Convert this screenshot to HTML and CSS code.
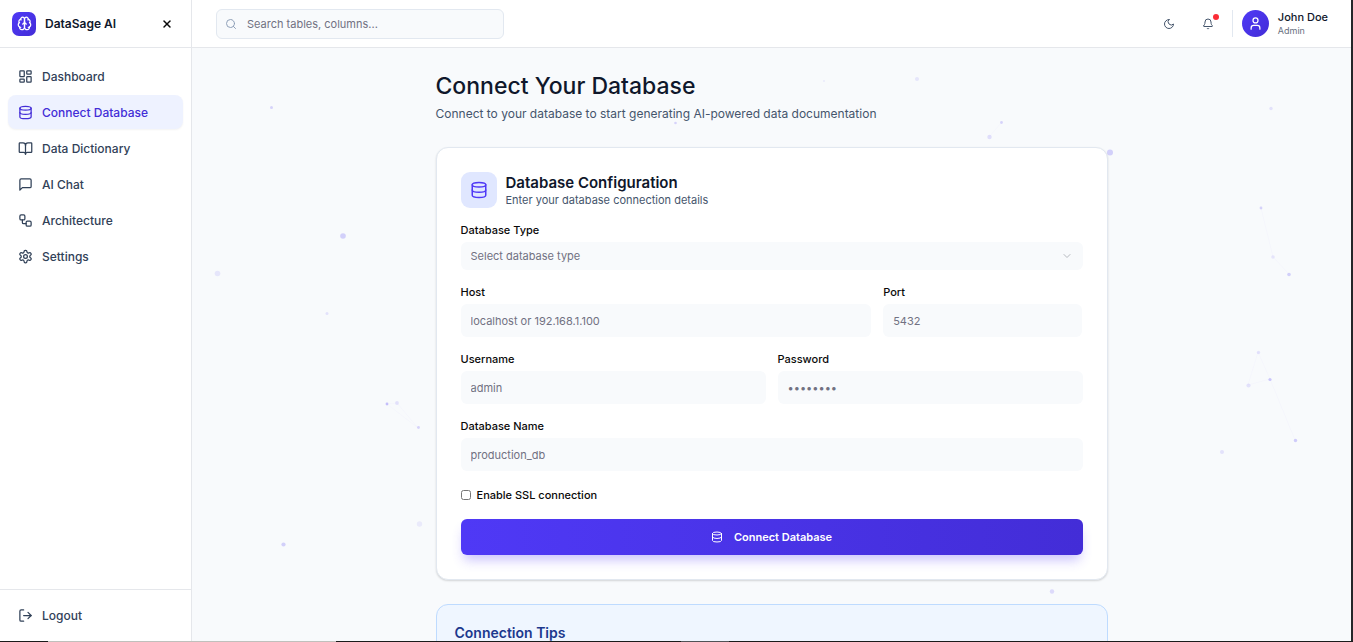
FILE: index.html
```html
<!DOCTYPE html>
<html lang="en">
<head>
  <meta charset="UTF-8" />
  <meta name="viewport" content="width=device-width, initial-scale=1.0"/>
  <title>DataSage AI - Connect Database</title>
  <link rel="stylesheet" href="styles.css">
</head>
<body>
  <!-- shared icons -->
  <svg class="sprite" aria-hidden="true">
    <symbol id="i-database" viewBox="0 0 24 24"><ellipse cx="12" cy="5" rx="9" ry="3"/><path d="M3 5V19A9 3 0 0 0 21 19V5"/><path d="M3 12A9 3 0 0 0 21 12"/></symbol>
  </svg>

  <div class="app">
    <aside class="sidebar">
      <div class="brand">
        <span class="logo">
          <svg class="icon" viewBox="0 0 24 24"><path d="M12 5a3 3 0 1 0-5.997.125 4 4 0 0 0-2.526 5.77 4 4 0 0 0 .556 6.588A4 4 0 1 0 12 18Z"/><path d="M12 5a3 3 0 1 1 5.997.125 4 4 0 0 1 2.526 5.77 4 4 0 0 1-.556 6.588A4 4 0 1 1 12 18Z"/><path d="M15 13a4.5 4.5 0 0 1-3-4 4.5 4.5 0 0 1-3 4"/><path d="M17.599 6.5a3 3 0 0 0 .399-1.375"/><path d="M6.003 5.125A3 3 0 0 0 6.401 6.5"/><path d="M3.477 10.896a4 4 0 0 1 .585-.396"/><path d="M19.938 10.5a4 4 0 0 1 .585.396"/><path d="M6 18a4 4 0 0 1-1.967-.516"/><path d="M19.967 17.484A4 4 0 0 1 18 18"/></svg>
        </span>
        <span class="brand-name">DataSage AI</span>
        <button class="icon-btn close" aria-label="Close sidebar">
          <svg class="icon" viewBox="0 0 24 24"><path d="M18 6 6 18"/><path d="m6 6 12 12"/></svg>
        </button>
      </div>

      <nav class="nav">
        <a class="nav-item" href="#">
          <svg class="icon" viewBox="0 0 24 24"><rect width="7" height="9" x="3" y="3" rx="1"/><rect width="7" height="5" x="14" y="3" rx="1"/><rect width="7" height="9" x="14" y="12" rx="1"/><rect width="7" height="5" x="3" y="16" rx="1"/></svg>
          Dashboard
        </a>
        <a class="nav-item active" href="#">
          <svg class="icon"><use href="#i-database"/></svg>
          Connect Database
        </a>
        <a class="nav-item" href="#">
          <svg class="icon" viewBox="0 0 24 24"><path d="M12 7v14"/><path d="M3 18a1 1 0 0 1-1-1V4a1 1 0 0 1 1-1h5a4 4 0 0 1 4 4 4 4 0 0 1 4-4h5a1 1 0 0 1 1 1v13a1 1 0 0 1-1 1h-6a3 3 0 0 0-3 3 3 3 0 0 0-3-3z"/></svg>
          Data Dictionary
        </a>
        <a class="nav-item" href="#">
          <svg class="icon" viewBox="0 0 24 24"><path d="M21 15a2 2 0 0 1-2 2H7l-4 4V5a2 2 0 0 1 2-2h14a2 2 0 0 1 2 2z"/></svg>
          AI Chat
        </a>
        <a class="nav-item" href="#">
          <svg class="icon" viewBox="0 0 24 24"><rect width="8" height="8" x="3" y="3" rx="2"/><path d="M7 11v4a2 2 0 0 0 2 2h4"/><rect width="8" height="8" x="13" y="13" rx="2"/></svg>
          Architecture
        </a>
        <a class="nav-item" href="#">
          <svg class="icon" viewBox="0 0 24 24"><path d="M12.22 2h-.44a2 2 0 0 0-2 2v.18a2 2 0 0 1-1 1.73l-.43.25a2 2 0 0 1-2 0l-.15-.08a2 2 0 0 0-2.73.73l-.22.38a2 2 0 0 0 .73 2.73l.15.1a2 2 0 0 1 1 1.72v.51a2 2 0 0 1-1 1.74l-.15.09a2 2 0 0 0-.73 2.73l.22.38a2 2 0 0 0 2.73.73l.15-.08a2 2 0 0 1 2 0l.43.25a2 2 0 0 1 1 1.73V20a2 2 0 0 0 2 2h.44a2 2 0 0 0 2-2v-.18a2 2 0 0 1 1-1.73l.43-.25a2 2 0 0 1 2 0l.15.08a2 2 0 0 0 2.73-.73l.22-.39a2 2 0 0 0-.73-2.73l-.15-.08a2 2 0 0 1-1-1.74v-.5a2 2 0 0 1 1-1.74l.15-.09a2 2 0 0 0 .73-2.73l-.22-.38a2 2 0 0 0-2.73-.73l-.15.08a2 2 0 0 1-2 0l-.43-.25a2 2 0 0 1-1-1.73V4a2 2 0 0 0-2-2z"/><circle cx="12" cy="12" r="3"/></svg>
          Settings
        </a>
      </nav>

      <div class="sidebar-footer">
        <a class="nav-item" href="#">
          <svg class="icon" viewBox="0 0 24 24"><path d="M9 21H5a2 2 0 0 1-2-2V5a2 2 0 0 1 2-2h4"/><path d="m16 17 5-5-5-5"/><path d="M21 12H9"/></svg>
          Logout
        </a>
      </div>
    </aside>

    <div class="content">
      <header class="topbar">
        <label class="search">
          <svg class="icon" viewBox="0 0 24 24"><circle cx="11" cy="11" r="8"/><path d="m21 21-4.3-4.3"/></svg>
          <input type="search" placeholder="Search tables, columns..." aria-label="Search" />
        </label>
        <div class="actions">
          <button class="icon-btn" aria-label="Toggle dark mode">
            <svg class="icon" viewBox="0 0 24 24"><path d="M12 3a6 6 0 0 0 9 9 9 9 0 1 1-9-9Z"/></svg>
          </button>
          <button class="icon-btn bell" aria-label="Notifications">
            <svg class="icon" viewBox="0 0 24 24"><path d="M10.268 21a2 2 0 0 0 3.464 0"/><path d="M3.262 15.326A1 1 0 0 0 4 17h16a1 1 0 0 0 .74-1.673C19.41 13.956 18 12.499 18 8A6 6 0 0 0 6 8c0 4.499-1.411 5.956-2.738 7.326"/></svg>
            <span class="dot"></span>
          </button>
          <div class="user">
            <span class="avatar">
              <svg class="icon" viewBox="0 0 24 24"><path d="M19 21v-2a4 4 0 0 0-4-4H9a4 4 0 0 0-4 4v2"/><circle cx="12" cy="7" r="4"/></svg>
            </span>
            <div>
              <p class="user-name">John Doe</p>
              <p class="user-role">Admin</p>
            </div>
          </div>
        </div>
      </header>

      <main class="main">
        <!-- floating particles behind the form -->
        <svg class="particles" aria-hidden="true">
          <g class="links">
            <path d="M195 356 205 355 226 380Z"/>
            <path d="M797 89 809 75"/>
            <path d="M1069 160 1081 209 1097 226"/>
            <path d="M1066 304 1056 337 1078 331Z"/>
            <path d="M1078 331 1103 392"/>
          </g>
          <circle cx="79.500" cy="59.500" r="1.500" opacity=".2"/>
          <circle cx="151" cy="188" r="2.800" opacity=".22"/>
          <circle cx="25.500" cy="225.500" r="2.800" opacity=".1"/>
          <circle cx="135" cy="265.500" r="1.500" opacity=".12"/>
          <circle cx="195" cy="356" r="1.400" opacity=".3"/>
          <circle cx="205" cy="355" r="1.900" opacity=".12"/>
          <circle cx="226.500" cy="379.500" r="1.400" opacity=".2"/>
          <circle cx="227.500" cy="476" r="2.700" opacity=".08"/>
          <circle cx="91.500" cy="496.500" r="2.100" opacity=".22"/>
          <circle cx="483.500" cy="75" r="1.300" opacity=".2"/>
          <circle cx="632" cy="33" r="1" opacity=".08"/>
          <circle cx="725" cy="31" r="2.100" opacity=".1"/>
          <circle cx="809.500" cy="74.500" r="1.400" opacity=".2"/>
          <circle cx="797.500" cy="89" r="2.200" opacity=".14"/>
          <circle cx="918" cy="104.500" r="3" opacity=".22"/>
          <circle cx="1079" cy="60.500" r="1.700" opacity=".12"/>
          <circle cx="1069" cy="160" r="1.400" opacity=".2"/>
          <circle cx="1081" cy="209" r="1.800" opacity=".1"/>
          <circle cx="1097" cy="226.500" r="1.800" opacity=".22"/>
          <circle cx="1066.500" cy="304.500" r="1.700" opacity=".12"/>
          <circle cx="1056.500" cy="337.500" r="2.100" opacity=".12"/>
          <circle cx="1078" cy="331.500" r="1.600" opacity=".26"/>
          <circle cx="1103.500" cy="392.500" r="1.700" opacity=".24"/>
          <circle cx="1030" cy="404" r="2" opacity=".12"/>
          <circle cx="860" cy="543.500" r="2.200" opacity=".16"/>
        </svg>

        <div class="page">
          <h1>Connect Your Database</h1>
          <p class="subtitle">Connect to your database to start generating AI-powered data documentation</p>

          <section class="card">
            <div class="card-head">
              <span class="card-icon"><svg class="icon"><use href="#i-database"/></svg></span>
              <div>
                <h2>Database Configuration</h2>
                <p>Enter your database connection details</p>
              </div>
            </div>

            <form class="form">
              <div class="field">
                <label for="dbType">Database Type</label>
                <div class="select-wrap">
                  <select id="dbType">
                    <option value="">Select database type</option>
                    <option>PostgreSQL</option>
                    <option>MySQL</option>
                  </select>
                  <svg class="icon chevron" viewBox="0 0 24 24"><path d="m6 9 6 6 6-6"/></svg>
                </div>
              </div>

              <div class="row host-row">
                <div class="field">
                  <label for="host">Host</label>
                  <input type="text" id="host" placeholder="localhost or 192.168.1.100" />
                </div>
                <div class="field">
                  <label for="port">Port</label>
                  <input type="text" id="port" placeholder="5432" />
                </div>
              </div>

              <div class="row">
                <div class="field">
                  <label for="username">Username</label>
                  <input type="text" id="username" placeholder="admin" />
                </div>
                <div class="field">
                  <label for="password">Password</label>
                  <input type="password" id="password" placeholder="••••••••" />
                </div>
              </div>

              <div class="field">
                <label for="dbName">Database Name</label>
                <input type="text" id="dbName" placeholder="production_db" />
              </div>

              <div class="check">
                <input type="checkbox" id="ssl" />
                <label for="ssl">Enable SSL connection</label>
              </div>

              <button type="submit" class="submit">
                <svg class="icon"><use href="#i-database"/></svg>
                Connect Database
              </button>
            </form>
          </section>

          <section class="tips">
            <h3>Connection Tips</h3>
          </section>
        </div>
      </main>
    </div>
  </div>
  <div class="edge"></div>
</body>
</html>
```
FILE: styles.css
```css
* { box-sizing: border-box; }
body {
  margin: 0;
  height: 100vh;
  display: flex;
  flex-direction: column;
  overflow: hidden;
  font-family: Inter, sans-serif;
  font-size: 11px;
  color: #0a0a0a;
  background: #f8fafc;
}
h1, h2, h3, p { margin: 0; }
button, input, select { font: inherit; color: inherit; }
button { cursor: pointer; }
a { color: inherit; text-decoration: none; }
.sprite { position: absolute; width: 0; height: 0; }
.icon {
  width: 15px;
  height: 15px;
  flex-shrink: 0;
  fill: none;
  stroke: currentColor;
  stroke-width: 2;
  stroke-linecap: round;
  stroke-linejoin: round;
}
.app {
  flex: 1;
  min-height: 0;
  display: flex;
  border-right: 2px solid #25272a;
}
.edge {
  height: 1px;
  background: linear-gradient(90deg, #1b1b1b 48px, #c0c0bc 48px 336px, #1b1b1b 336px 681px, #505256 681px 729px, #1b1b1b 729px);
}

/* sidebar */
.sidebar {
  width: 192px;
  flex-shrink: 0;
  display: flex;
  flex-direction: column;
  background: #fff;
  border-right: 1px solid #e5e7eb;
}
.brand {
  height: 48px;
  display: flex;
  align-items: center;
  gap: 9px;
  padding: 0 12px;
  border-bottom: 1px solid #e5e7eb;
}
.logo {
  width: 24px;
  height: 24px;
  display: grid;
  place-items: center;
  color: #fff;
  border-radius: 7px;
  background: linear-gradient(135deg, #4f39f6, #432dd7);
}
.brand-name {
  font-size: 12px;
  font-weight: 600;
  color: #0f172b;
}
.icon-btn {
  width: 24px;
  height: 24px;
  display: grid;
  place-items: center;
  padding: 0;
  border: 0;
  background: none;
}
.icon-btn .icon { width: 12px; height: 12px; }
.close { margin-left: auto; }
.close .icon { stroke-width: 3; }
.nav {
  flex: 1;
  display: flex;
  flex-direction: column;
  gap: 2px;
  padding: 11px 8px;
}
.nav-item {
  height: 34px;
  display: flex;
  align-items: center;
  gap: 9px;
  padding: 0 10px;
  border-radius: 8px;
  font-size: 12px;
  font-weight: 500;
  color: #314158;
}
.nav-item.active {
  color: #432dd7;
  background: #eef2ff;
  box-shadow: 0 1px 2px rgba(0, 0, 0, 0.05);
}
.sidebar-footer {
  padding: 8px 8px 9px;
  border-top: 1px solid #e5e7eb;
}

/* top bar */
.content {
  flex: 1;
  min-width: 0;
  display: flex;
  flex-direction: column;
}
.topbar {
  height: 48px;
  flex-shrink: 0;
  display: flex;
  align-items: center;
  justify-content: space-between;
  padding: 0 23px 0 24px;
  background: #fff;
  border-bottom: 1px solid #e5e7eb;
}
.search {
  width: 288px;
  height: 30px;
  display: flex;
  align-items: center;
  gap: 10px;
  padding: 0 8px;
  border: 1px solid #e2e8f0;
  border-radius: 6px;
  background: #f8fafc;
}
.search .icon { width: 12px; height: 12px; color: #90a1b9; }
.search input {
  flex: 1;
  min-width: 0;
  padding: 0;
  border: 0;
  outline: 0;
  background: none;
}
input::placeholder { color: #717182; opacity: 1; }
.actions {
  display: flex;
  align-items: center;
  gap: 15px;
  color: #45556c;
}
.bell { position: relative; }
.dot {
  position: absolute;
  top: 2px;
  right: 1px;
  width: 6px;
  height: 6px;
  border-radius: 50%;
  background: #fb2c36;
}
.user {
  height: 27px;
  display: flex;
  align-items: center;
  gap: 9px;
  margin-left: -3px;
  padding-left: 9px;
  border-left: 1px solid #e2e8f0;
}
.avatar {
  width: 27px;
  height: 27px;
  display: grid;
  place-items: center;
  color: #fff;
  border-radius: 50%;
  background: linear-gradient(135deg, #4f39f6, #432dd7);
}
.user-name {
  line-height: 13px;
  font-weight: 500;
  color: #0f172b;
}
.user-role {
  font-size: 9px;
  line-height: 13px;
  color: #6a7282;
}

/* page */
.main {
  flex: 1;
  min-height: 0;
  position: relative;
  overflow: hidden;
  padding: 24px;
}
.particles {
  position: absolute;
  inset: 0;
  width: 100%;
  height: 100%;
  fill: #4f39f6;
}
.links { fill: none; stroke: #4f39f6; stroke-opacity: 0.02; }
.page {
  position: relative;
  max-width: 672px;
  margin: 0 auto;
}
h1 {
  font-size: 23px;
  line-height: 29px;
  font-weight: 500;
  color: #0f172b;
}
.subtitle {
  margin: 3px 0 23px;
  font-size: 12px;
  line-height: 20px;
  color: #45556c;
}
.card {
  padding: 24px;
  border: 1px solid #e2e8f0;
  border-radius: 12px;
  background: #fff;
  box-shadow: 0 1px 2px rgba(0, 0, 0, 0.15);
}
.card-head {
  display: flex;
  align-items: center;
  gap: 9px;
  margin-bottom: 16px;
}
.card-icon {
  width: 36px;
  height: 36px;
  display: grid;
  place-items: center;
  color: #4f39f6;
  border-radius: 9px;
  background: #e0e7ff;
}
.card-icon .icon { width: 18px; height: 18px; }
h2 {
  font-size: 15px;
  line-height: 20px;
  font-weight: 600;
  color: #0f172b;
}
.card-head p { line-height: 15px; color: #45556c; }
.form {
  display: flex;
  flex-direction: column;
  gap: 16px;
}
.row {
  display: grid;
  grid-template-columns: 1fr 1fr;
  gap: 12px;
}
.host-row { grid-template-columns: repeat(3, 1fr); }
.host-row .field:first-child { grid-column: span 2; }
.field {
  display: flex;
  flex-direction: column;
  gap: 6px;
}
.field label, .check label { line-height: 12px; font-weight: 500; }
.field input, .field select {
  width: 100%;
  height: 33px;
  padding: 0 10px;
  border: 0;
  border-radius: 6px;
  background: #f8fafc;
}
.select-wrap { position: relative; }
.field select {
  display: block;
  height: 28px;
  appearance: none;
  color: #717182;
}
.chevron {
  position: absolute;
  top: 8px;
  right: 10px;
  width: 12px;
  height: 12px;
  color: #b5b8be;
  pointer-events: none;
}
.check {
  height: 16px;
  display: flex;
  align-items: center;
  gap: 6px;
}
.check input { width: 10px; height: 10px; margin: 0; }
.submit {
  height: 36px;
  display: flex;
  align-items: center;
  justify-content: center;
  gap: 11px;
  border: 0;
  border-radius: 6px;
  font-weight: 600;
  color: #fff;
  background: linear-gradient(90deg, #4f39f6, #432dd7);
  box-shadow: 0 8px 12px -3px rgba(79, 57, 246, 0.3);
}
.submit .icon { width: 12px; height: 12px; }
.tips {
  margin-top: 24px;
  padding: 18px;
  border: 1px solid #bedbff;
  border-radius: 12px;
  background: #eff6ff;
}
h3 {
  font-size: 14px;
  line-height: 20px;
  font-weight: 600;
  color: #1c398e;
}
```
